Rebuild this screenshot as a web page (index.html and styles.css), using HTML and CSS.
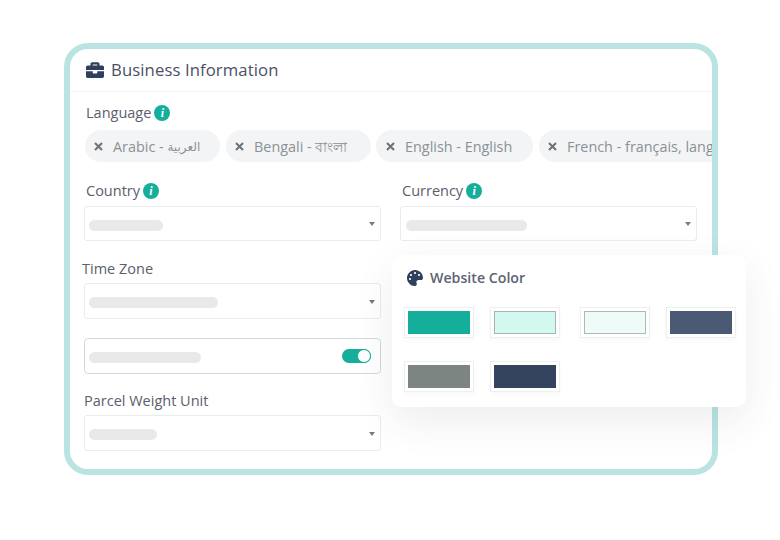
FILE: index.html
```html
<!DOCTYPE html>
<html lang="en">
<head>
<meta charset="utf-8">
<title>Business Information</title>
<link rel="stylesheet" href="styles.css">
</head>
<body>
<div class="stage">
  <section class="card">
    <header class="head">
      <svg class="head-icon" viewBox="0 0 512 512"><path d="M320 336c0 8.84-7.16 16-16 16h-96c-8.84 0-16-7.16-16-16v-48H0v144c0 25.6 22.4 48 48 48h416c25.6 0 48-22.4 48-48V288H320v48zm144-208h-80V80c0-25.6-22.4-48-48-48H176c-25.6 0-48 22.4-48 48v48H48c-25.6 0-48 22.4-48 48v80h512v-80c0-25.6-22.4-48-48-48zm-144 0H192V96h128v32z"/></svg>
      <h2 class="head-title">Business Information</h2>
    </header>
    <div class="body">
      <div class="label label-lang">Language <span class="info">i</span></div>
      <div class="chips">
        <span class="chip chip-a"><svg class="x" viewBox="0 0 9 9"><path d="M1 1l7 7M8 1l-7 7"/></svg>Arabic -&nbsp;<span class="arabic">العربية</span></span>
        <span class="chip chip-b"><svg class="x" viewBox="0 0 9 9"><path d="M1 1l7 7M8 1l-7 7"/></svg>Bengali - বাংলা</span>
        <span class="chip chip-c"><svg class="x" viewBox="0 0 9 9"><path d="M1 1l7 7M8 1l-7 7"/></svg>English - English</span>
        <span class="chip chip-d"><svg class="x" viewBox="0 0 9 9"><path d="M1 1l7 7M8 1l-7 7"/></svg>French - français, langue française</span>
      </div>
      <div class="two">
        <div>
          <div class="label label-field">Country <span class="info">i</span></div>
          <div class="select select-short"><span class="bar bar-country"></span><span class="caret"></span></div>
        </div>
        <div>
          <div class="label label-field">Currency <span class="info">i</span></div>
          <div class="select select-short"><span class="bar bar-currency"></span><span class="caret"></span></div>
        </div>
      </div>
      <div class="label label-time">Time Zone</div>
      <div class="select"><span class="bar bar-time"></span><span class="caret"></span></div>
      <div class="select toggle-row">
        <span class="bar bar-toggle"></span>
        <span class="toggle"><span class="knob"></span></span>
      </div>
      <div class="label label-parcel">Parcel Weight Unit</div>
      <div class="select"><span class="bar bar-parcel"></span><span class="caret"></span></div>
    </div>
  </section>
  <aside class="popup">
    <div class="popup-head">
      <svg class="popup-icon" viewBox="0 0 512 512"><path d="M204.3 5C104.9 24.4 24.8 104.3 5.2 203.4c-37 187 131.7 326.4 258.8 306.7 41.2-6.4 61.4-54.6 42.5-91.7-23.1-45.4 9.9-98.4 60.9-98.4h79.7c35.8 0 64.8-29.6 64.9-65.3C511.5 97.1 368.1-26.9 204.3 5zM96 320c-17.7 0-32-14.3-32-32s14.3-32 32-32 32 14.3 32 32-14.3 32-32 32zm32-128c-17.7 0-32-14.3-32-32s14.3-32 32-32 32 14.3 32 32-14.3 32-32 32zm128-64c-17.7 0-32-14.3-32-32s14.3-32 32-32 32 14.3 32 32-14.3 32-32 32zm128 64c-17.7 0-32-14.3-32-32s14.3-32 32-32 32 14.3 32 32-14.3 32-32 32z"/></svg>
      <span class="popup-title">Website Color</span>
    </div>
    <div class="swatches">
      <div class="frame"><span class="sw sw-teal"></span></div>
      <div class="frame"><span class="sw sw-mint"></span></div>
      <div class="frame"><span class="sw sw-pale"></span></div>
      <div class="frame"><span class="sw sw-slate"></span></div>
      <div class="frame"><span class="sw sw-grey"></span></div>
      <div class="frame"><span class="sw sw-navy"></span></div>
    </div>
  </aside>
</div>
</body>
</html>
```
FILE: styles.css
```css
* { box-sizing: border-box; }
html, body { margin: 0; padding: 0; background: #fff; }
body { font-family: "Open Sans", "Noto Sans", "DejaVu Sans", sans-serif; color: #555b68; }
.stage { position: relative; width: 780px; height: 540px; overflow: hidden; padding: 43px 0 0 64px; }
.card { width: 654px; height: 432px; border: 6px solid #b9e4e2; border-radius: 24px; background: #fff; overflow: hidden; }
.head { height: 43px; display: flex; align-items: center; gap: 7px; padding: 0 0 1px 16px; border-bottom: 1px solid #f3f4f4; }
.head-icon { width: 18px; height: 18px; fill: #2f3f5c; flex: none; }
.head-title { margin: 0; font-size: 16.7px; font-weight: 400; line-height: 22px; color: #4a5163; letter-spacing: .1px; }
.body { padding: 0 0 0 14px; }
.label { font-size: 14.5px; line-height: 20px; color: #5a606c; display: flex; align-items: center; gap: 3px; }
.label-lang { margin: 11px 0 0 2px; }
.label-field { margin: 19px 0 5px 2px; }
.label-time { margin: 18px 0 4px -2px; }
.label-parcel { margin: 17px 0 4px 0; }
.info { width: 16px; height: 16px; border-radius: 50%; background: #14ae9a; color: #fff; font: italic 700 12px/16px "Liberation Serif", serif; text-align: center; }
.chips { display: flex; gap: 6px; margin: 7px 0 0 1px; overflow: hidden; white-space: nowrap; }
.chip { flex: none; height: 32px; border-radius: 16px; background: #f2f4f5; color: #8b9196; font-size: 14.4px; line-height: 32px; padding: 1px 0 0 9px; display: flex; align-items: center; }
.chip-a { width: 135px; }
.chip-b { width: 145px; }
.chip-c { width: 157px; margin-left: -1px; padding-left: 10px; }
.chip-d { width: 260px; }
.arabic { font-size: 12px; }
.x { width: 9px; height: 9px; margin-right: 10px; fill: none; stroke: #6c7277; stroke-width: 2; flex: none; }
.two { display: grid; grid-template-columns: 297px 297px; column-gap: 19px; }
.select { width: 297px; height: 36px; border: 1px solid #e9ebec; border-radius: 3px; background: #fff; display: flex; align-items: center; justify-content: space-between; padding: 0 5.5px 0 4px; }
.select-short { height: 35px; }
.select-short .bar { margin-top: 4px; }
.toggle-row { margin-top: 19px; border-color: #d5d8da; border-radius: 4px; padding-right: 9px; }
.bar { display: block; height: 11px; border-radius: 6px; background: #e9e9e9; margin-top: 2px; }
.bar-country { width: 74px; }
.bar-currency { width: 121px; margin-left: 1px; }
.bar-time { width: 129px; }
.bar-toggle { width: 112px; }
.bar-parcel { width: 68px; }
.caret { width: 0; height: 0; border: 3px solid transparent; border-top: 4px solid #777c80; border-bottom: 0; margin-top: 1px; }
.toggle { width: 29px; height: 14px; border-radius: 7px; background: #14ae9a; display: flex; justify-content: flex-end; }
.knob { width: 14px; height: 14px; border-radius: 50%; background: #fff; border: 1px solid #14ae9a; }
.popup { position: absolute; left: 392px; top: 255px; width: 354px; height: 152px; background: #fff; border-radius: 10px; box-shadow: 0 14px 40px rgba(40, 50, 60, .09); padding: 15px 0 0 12px; }
.popup-head { display: flex; align-items: center; gap: 7px; height: 16px; margin: 0 0 21px 3px; }
.popup-icon { width: 16px; height: 16px; fill: #2f3f5c; flex: none; }
.popup-title { font-size: 14.2px; font-weight: 600; line-height: 16px; color: #5d6373; }
.swatches { display: grid; grid-template-columns: 86px 90px 86px 70px; grid-auto-rows: 31px; row-gap: 23px; }
.frame { width: 70px; height: 31px; border: 1px solid #eef0f0; padding: 3px; background: #fff; box-shadow: 0 2px 5px rgba(0, 0, 0, .03); }
.sw { display: block; width: 100%; height: 100%; border: 1px solid transparent; }
.sw-teal { background: #14ae9a; }
.sw-mint { background: #d3f8f0; border-color: #a8b4b0; }
.sw-pale { background: #eefbf8; border-color: #b0b8b6; }
.sw-slate { background: #4a5a74; }
.sw-grey { background: #7d8583; }
.sw-navy { background: #34445e; }
```
